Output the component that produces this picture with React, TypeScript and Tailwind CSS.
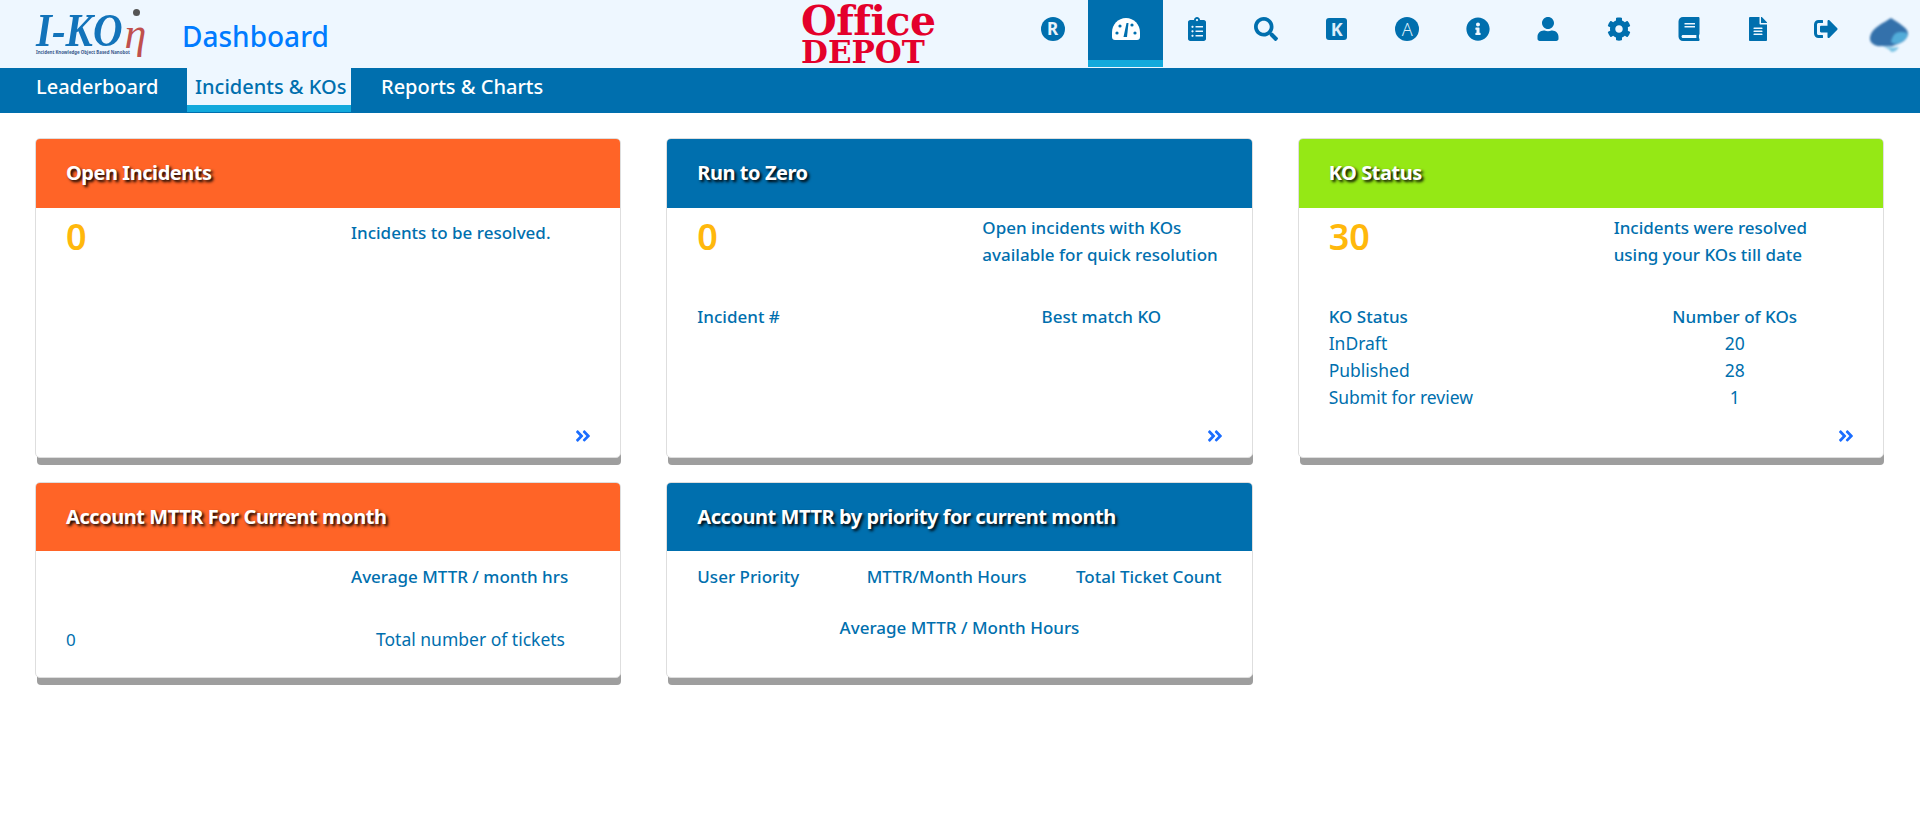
import React from "react";
import {
  FaAngleDoubleRight,
  FaBook,
  FaClipboardList,
  FaCog,
  FaFileAlt,
  FaInfoCircle,
  FaSearch,
  FaSignOutAlt,
  FaUser,
} from "react-icons/fa";

function GaugeIcon() {
  return (
    <svg width="28" height="22" viewBox="0 0 28 22">
      <path d="M14 0C6 0 0 6.5 0 14.5V19c0 1.8 1.2 3 3 3h22c1.8 0 3-1.2 3-3v-4.500C28 6.500 22 0 14 0z" fill="#fff" />
      <circle cx="5" cy="15" r="1.600" fill="#006fae" />
      <circle cx="8" cy="8" r="1.600" fill="#006fae" />
      <circle cx="20" cy="7" r="1.600" fill="#006fae" />
      <circle cx="23" cy="15" r="1.600" fill="#006fae" />
      <path d="M11.500 19l3-14h2l-1.500 14z" fill="#006fae" />
    </svg>
  );
}

function NavIcons() {
  const iconBox = "flex h-[67px] w-[70.5px] items-center justify-center pb-[9px] text-[#006fae]";
  return (
    <div className="flex h-[67px] items-start">
      <div className="flex h-[67px] w-[71px] items-center justify-center pb-[9px]">
        <span className="flex h-[24px] w-[24px] items-center justify-center rounded-full bg-[#006fae] text-[17px] font-bold text-[#eaf4fb]">R</span>
      </div>
      <div className="flex h-[67px] w-[75px] items-center justify-center border-b-[7px] border-[#12a9dc] bg-[#006fae] pb-[2px]">
        <GaugeIcon />
      </div>
      <div className="flex h-[67px] w-[68px] items-center justify-center pb-[9px] text-[#006fae]">
        <FaClipboardList size={24} />
      </div>
      <div className={iconBox}><FaSearch size={24} /></div>
      <div className={iconBox}>
        <span className="flex h-[22px] w-[21px] items-center justify-center rounded-[3px] bg-[#006fae] text-[18px] font-bold text-[#dceefa]">K</span>
      </div>
      <div className={iconBox}>
        <span className="flex h-[24px] w-[24px] items-center justify-center rounded-full bg-[#006fae] text-[18px] font-light text-[#dceefa]">A</span>
      </div>
      <div className={iconBox}><FaInfoCircle size={24} /></div>
      <div className={iconBox}><FaUser size={24} /></div>
      <div className={iconBox}><FaCog size={24} /></div>
      <div className={iconBox}><FaBook size={24} /></div>
      <div className="flex h-[67px] w-[67px] items-center justify-center pb-[9px] text-[#006fae]"><FaFileAlt size={24} /></div>
      <div className="flex h-[67px] w-[68px] items-center justify-center pb-[9px] text-[#006fae]"><FaSignOutAlt size={24} /></div>
      <div className="flex h-[67px] flex-1 items-center pl-[10px] pt-[2px]">
        <svg width="38" height="36" viewBox="0 0 38 36" className="blur-[0.8px]">
          <path d="M21 1C14 6 2 10 0 20c-1 6 5 10 12 9 6 0 10 1 13-1 6-2 13-5 13-12C37 10 28 6 21 1z" fill="#3471ab" />
          <path d="M30 15c-5 0-8 4-9 10 3 3 8 2 12-1 4-2 5-6 4-8-2-1-4-1-7-1z" fill="#52acd9" />
          <path d="M12 29c4 2 8 3 9 6 4 0 6-2 8-5-6 1-12 0-17-1z" fill="#7cc4e4" />
        </svg>
      </div>
    </div>
  );
}

function Header() {
  return (
    <header className="flex h-[68px] bg-[#eef7ff]">
      <div className="ml-9 flex h-[67px] w-[146px] flex-col pt-[13px]">
        <div className="flex h-[36px] items-start leading-none">
          <span className="origin-top scale-y-[1.15] font-['Liberation_Serif'] text-[41px] font-bold italic leading-[30px] text-[#1273ba] blur-[0.3px]">I-KO</span>
          <span className="relative ml-[2px] mt-[6px] font-['Liberation_Serif'] text-[44px] italic leading-[30px] text-[#c0504d]">
            η
            <span className="absolute left-[8px] top-[-10px] h-[7px] w-[7px] rounded-full bg-[#555]" />
          </span>
        </div>
        <div className="whitespace-nowrap text-[4.400px] font-bold leading-[6px] text-[#3a5a8c]">Incident Knowledge Object Based Nanobot</div>
      </div>
      <div className="w-[619px] pt-[15px] text-[28px] font-medium leading-[42px] text-[#007bff]">Dashboard</div>
      <div className="flex w-[216px] flex-col pt-[4px] font-['DejaVu_Serif'] font-bold text-[#e4002b]">
        <span className="text-[41px] leading-[35px] tracking-[-0.5px]">Office</span>
        <span className="text-[31px] leading-[26px]">DEPOT</span>
      </div>
      <div className="flex-1"><NavIcons /></div>
    </header>
  );
}

function SubNav() {
  return (
    <nav className="flex h-[45px] bg-[#006fae] pl-9 text-[20px] font-medium text-white">
      <a className="mr-[29px] w-[122px] whitespace-nowrap pt-[5px] leading-[28px]">Leaderboard</a>
      <a className="h-[44px] w-[164px] whitespace-nowrap border-b-[7px] border-[#12a9dc] bg-[#eef7ff] px-2 pt-[5px] leading-[28px] text-[#006fae]">Incidents &amp; KOs</a>
      <a className="ml-[30px] whitespace-nowrap pt-[5px] leading-[28px]">Reports &amp; Charts</a>
    </nav>
  );
}

type CardProps = {
  title: string;
  headerClass: string;
  heightClass: string;
  children: React.ReactNode;
};

function Card({ title, headerClass, heightClass, children }: CardProps) {
  return (
    <section className={`flex flex-col rounded-[5px] border border-[#dedede] bg-white shadow-[1px_8px_0_-1px_#9e9e9e] ${heightClass}`}>
      <div className={`flex shrink-0 items-center rounded-t-[4px] px-[30px] pb-[1px] text-[20px] font-bold tracking-[-0.45px] text-white [text-shadow:2px_2px_3px_#000] ${headerClass}`}>
        {title}
      </div>
      <div className="relative flex min-h-0 flex-1 flex-col px-[30px] text-[17px] leading-[27px] text-[#006fae]">
        {children}
      </div>
    </section>
  );
}

function More() {
  return (
    <div className="mr-[-2px] mt-auto flex justify-end pb-[12px] text-[#1a6dff]">
      <FaAngleDoubleRight size={18} />
    </div>
  );
}

function Stat({ value, children }: { value: string; children: React.ReactNode }) {
  return (
    <div className="flex">
      <div className="w-[285px] pt-[5px] text-[36px] font-semibold leading-[48px] text-[#ffb80c]">{value}</div>
      <div className="pt-[6px] font-medium">{children}</div>
    </div>
  );
}

export default function App() {
  return (
    <div className="min-h-[834px] bg-white font-['Noto_Sans',sans-serif]">
      <Header />
      <SubNav />
      <main className="grid grid-cols-3 gap-x-[45px] gap-y-[24px] pl-[35px] pr-9 pt-[25px]">
        <Card title="Open Incidents" headerClass="h-[69px] bg-[#ff6427]" heightClass="h-[320px]">
          <Stat value="0"><span className="block pt-[5px]">Incidents to be resolved.</span></Stat>
          <More />
        </Card>
        <Card title="Run to Zero" headerClass="h-[69px] bg-[#006fae]" heightClass="h-[320px]">
          <Stat value="0">
            Open incidents with KOs
            <br />
            available for quick resolution
          </Stat>
          <div className="mt-[35px] flex font-medium">
            <span className="w-[285px]">Incident #</span>
            <span className="w-[238px] text-center">Best match KO</span>
          </div>
          <More />
        </Card>
        <Card title="KO Status" headerClass="h-[69px] bg-[#95e815]" heightClass="h-[320px]">
          <Stat value="30">
            Incidents were resolved
            <br />
            using your KOs till date
          </Stat>
          <div className="mt-[35px] grid grid-cols-[285px_1fr] text-[17.500px]">
            <span className="text-[17px] font-medium">KO Status</span>
            <span className="w-[242px] text-center text-[17px] font-medium">Number of KOs</span>
            <span>InDraft</span>
            <span className="w-[242px] text-center">20</span>
            <span>Published</span>
            <span className="w-[242px] text-center">28</span>
            <span>Submit for review</span>
            <span className="w-[242px] text-center">1</span>
          </div>
          <More />
        </Card>
        <Card title="Account MTTR For Current month" headerClass="h-[68px] bg-[#ff6427]" heightClass="h-[196px]">
          <div className="flex pt-[12px]">
            <span className="w-[285px]" />
            <span className="font-medium">Average MTTR / month hrs</span>
          </div>
          <div className="mt-[36px] flex">
            <span className="w-[285px]">0</span>
            <span className="w-[240px] text-center text-[17.500px]">Total number of tickets</span>
          </div>
        </Card>
        <Card title="Account MTTR by priority for current month" headerClass="h-[68px] bg-[#006fae]" heightClass="h-[196px]">
          <div className="flex justify-between pt-[12px] font-medium">
            <span>User Priority</span>
            <span className="ml-[18px]">MTTR/Month Hours</span>
            <span>Total Ticket Count</span>
          </div>
          <div className="mt-[24px] text-center font-medium">Average MTTR / Month Hours</div>
        </Card>
      </main>
    </div>
  );
}
